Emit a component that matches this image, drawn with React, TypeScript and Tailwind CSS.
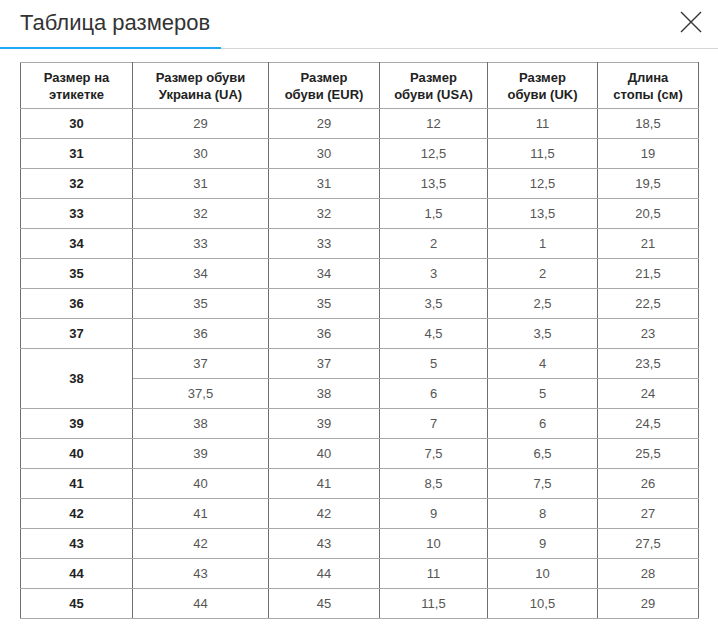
import React from 'react';

const heads = [
    ['Размер на', 'этикетке'],
    ['Размер обуви', 'Украина (UA)'],
    ['Размер', 'обуви (EUR)'],
    ['Размер', 'обуви (USA)'],
    ['Размер', 'обуви (UK)'],
    ['Длина', 'стопы (см)'],
];

const widths = ['w-[112px]', 'w-[136px]', 'w-[111px]', 'w-[108px]', 'w-[110px]', 'w-[101px]'];

// label, then UA, EUR, USA, UK, cm
const rows: [string, string[][]][] = [
    ['30', [['29', '29', '12', '11', '18,5']]],
    ['31', [['30', '30', '12,5', '11,5', '19']]],
    ['32', [['31', '31', '13,5', '12,5', '19,5']]],
    ['33', [['32', '32', '1,5', '13,5', '20,5']]],
    ['34', [['33', '33', '2', '1', '21']]],
    ['35', [['34', '34', '3', '2', '21,5']]],
    ['36', [['35', '35', '3,5', '2,5', '22,5']]],
    ['37', [['36', '36', '4,5', '3,5', '23']]],
    ['38', [['37', '37', '5', '4', '23,5'], ['37,5', '38', '6', '5', '24']]],
    ['39', [['38', '39', '7', '6', '24,5']]],
    ['40', [['39', '40', '7,5', '6,5', '25,5']]],
    ['41', [['40', '41', '8,5', '7,5', '26']]],
    ['42', [['41', '42', '9', '8', '27']]],
    ['43', [['42', '43', '10', '9', '27,5']]],
    ['44', [['43', '44', '11', '10', '28']]],
    ['45', [['44', '45', '11,5', '10,5', '29']]],
];

const cell = 'border-x border-x-[#6e6e6e] border-y border-y-[#a8a8a8] text-center p-0';

export default function App() {
    return (
        <div className="w-[718px] h-[630px] bg-white overflow-hidden" style={{ fontFamily: '"Liberation Sans", Arial, sans-serif' }}>
            <div className="relative flex items-center justify-between h-[49px] border-b border-[#d6d6d6] pl-5 pr-[15px]">
                <h1 className="text-[22px] leading-none font-normal text-[#333] -mt-[3px]">Таблица размеров</h1>
                <button className="w-[24px] h-[24px] -mt-[4px] flex items-center justify-center">
                    <svg width="24" height="24" viewBox="0 0 24 24" fill="none" stroke="#333" strokeWidth="1.4">
                        <path d="M2 2 L22 22 M22 2 L2 22" />
                    </svg>
                </button>
                <div className="absolute left-0 bottom-[-1px] w-[221px] h-[2px] bg-[#1ea7f2]" />
            </div>

            <div className="pt-[13px] pl-5">
                <table className="border-collapse table-fixed text-[13px]">
                    <thead>
                        <tr className="h-[46px]">
                            {heads.map((h, i) => (
                                <th key={i} className={`${cell} ${widths[i]} font-bold text-[#222] leading-[17px]`}>
                                    {h[0]}
                                    <br />
                                    {h[1]}
                                </th>
                            ))}
                        </tr>
                    </thead>
                    <tbody>
                        {rows.map(([label, subs]) =>
                            subs.map((vals, j) => (
                                <tr key={label + j} className="h-[30px]">
                                    {j === 0 && (
                                        <td rowSpan={subs.length} className={`${cell} font-bold text-[#222]`}>
                                            {label}
                                        </td>
                                    )}
                                    {vals.map((v, k) => (
                                        <td key={k} className={`${cell} text-[#555]`}>
                                            {v}
                                        </td>
                                    ))}
                                </tr>
                            ))
                        )}
                    </tbody>
                </table>
            </div>
        </div>
    );
}
